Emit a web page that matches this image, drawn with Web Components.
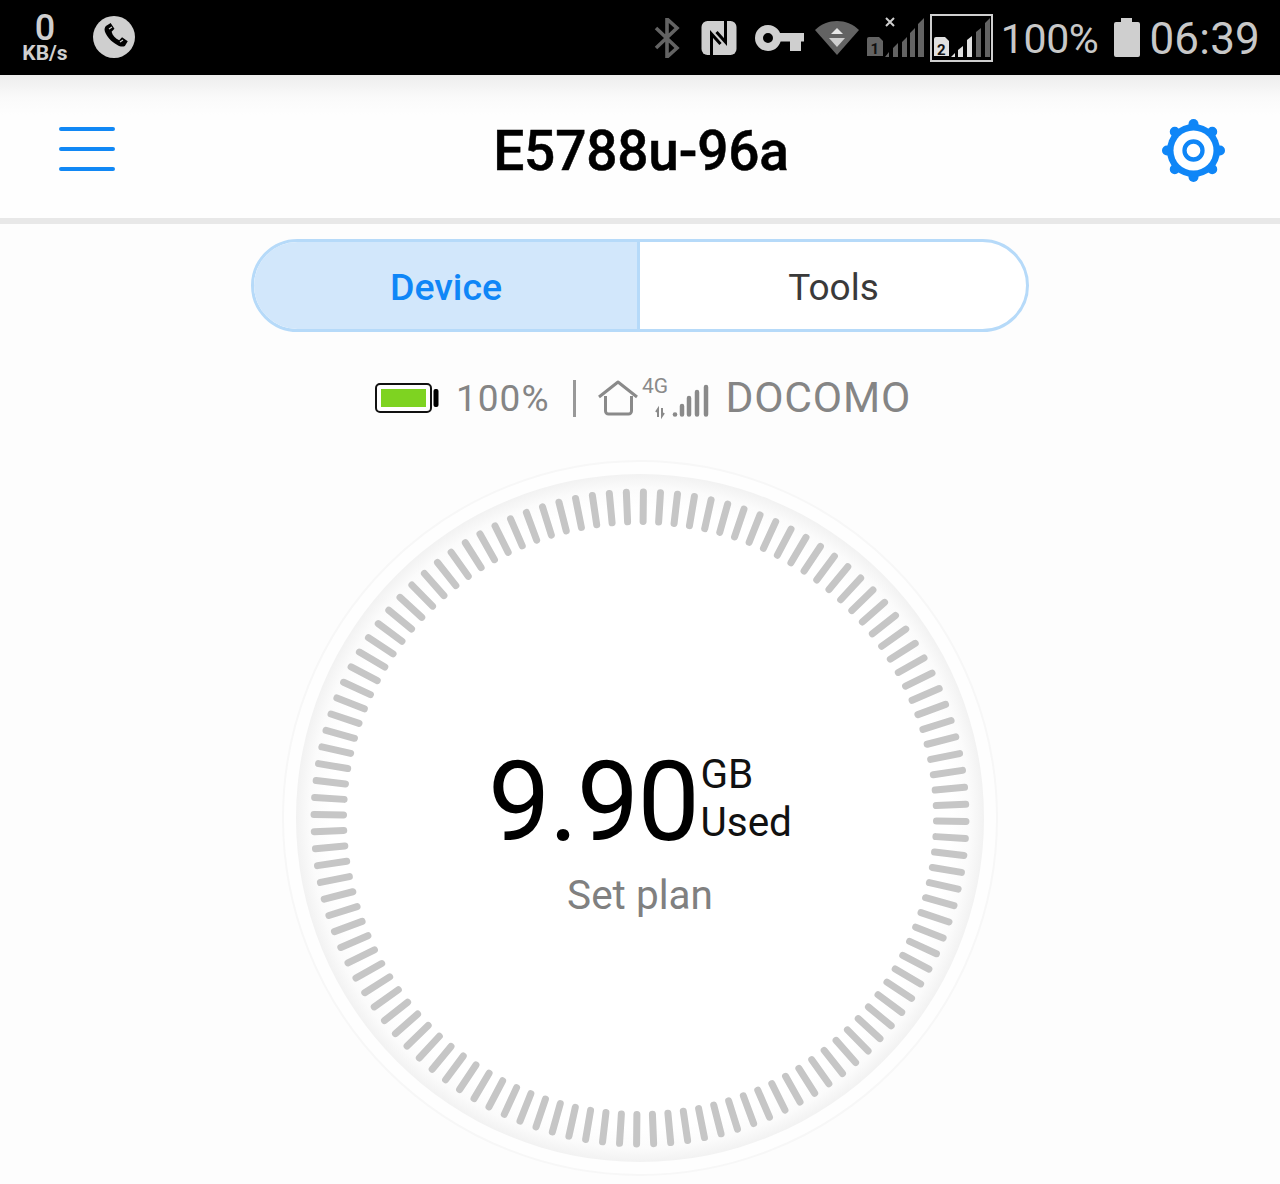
<!DOCTYPE html>
<html>
<head>
<meta charset="utf-8">
<title>E5788u-96a</title>
<style>
  html, body { margin: 0; padding: 0; background: #fdfdfd; }
  body { width: 1280px; height: 1184px; overflow: hidden; font-family: Roboto, "Liberation Sans", sans-serif; }
</style>
</head>
<body>
<status-bar></status-bar>
<app-header title-text="E5788u-96a"></app-header>
<tab-switch></tab-switch>
<device-info></device-info>
<usage-gauge value="9.90" unit="GB" label="Used" action="Set plan"></usage-gauge>

<script>
class statusBar extends HTMLElement {
  constructor() {
    super();
    this.shadowDOM = this.attachShadow({mode: 'open'});
    this.render();
  }

  render() {
    this.shadowDOM.innerHTML = `
    <style>
    :host { display: flex; align-items: center; height: 75px; background: #000; color: #cfcfcf; box-sizing: border-box; padding: 0 20px 0 21px; }
    .speed { width: 48px; display: flex; flex-direction: column; align-items: center; margin-top: 1px; }
    .speed b { font-size: 36px; line-height: 30px; font-weight: 500; }
    .speed span { font-size: 21px; line-height: 20px; font-weight: 700; }
    .call { margin-left: 24px; margin-bottom: 2px; }
    .right { margin-left: auto; display: flex; align-items: center; }
    svg { display: block; flex: none; }
    .pct { font-size: 41px; font-weight: 400; margin-left: 8px; margin-top: 2px; letter-spacing: -0.4px; color: #c8c8c8; }
    .time { font-size: 44px; font-weight: 400; margin-left: 9px; margin-top: 2px; letter-spacing: 0.2px; color: #c8c8c8; }
    </style>
    <div class="speed"><b>0</b><span>KB/s</span></div>
    <svg class="call" width="42" height="42" viewBox="0 0 42 42">
      <circle cx="21" cy="21" r="21" fill="#cfcfcf"/>
      <path d="M12 11l5-3 4 6-3 3c1 4 4 7 8 9l3-3 6 4-3 5c-2 1-5 1-8-1-7-4-11-9-13-14-1-3 0-5 1-6z" fill="#000" transform="translate(1.5 -0.5) scale(0.95)"/>
      <path d="M16 13l3-2M27 26l3-2" stroke="#cfcfcf" stroke-width="1.2"/>
    </svg>
    <div class="right">
      <svg width="26" height="40" viewBox="0 0 26 40" fill="none" stroke="#636363" stroke-width="3.6">
        <path d="M2 10l21 20-10 9V1l10 9L2 30"/>
      </svg>
      <svg style="margin-left:21px" width="36" height="36" viewBox="0 0 36 36">
        <rect x="0.5" y="1" width="35" height="34" rx="6" fill="#cfcfcf"/>
        <path d="M10.500 35V14l9 10" fill="none" stroke="#000" stroke-width="3"/>
        <path d="M24.500 1v21l-9-10" fill="none" stroke="#000" stroke-width="3"/>
      </svg>
      <svg style="margin-left:18px" width="50" height="26" viewBox="0 0 50 26">
        <circle cx="13" cy="13" r="9" fill="none" stroke="#cfcfcf" stroke-width="8"/>
        <path d="M21 8h28v8.500h-3V26H35v-9.500H21z" fill="#cfcfcf"/>
      </svg>
      <svg style="margin-left:10px" width="44" height="36" viewBox="0 0 44 36">
        <path d="M0 10C6 4 14 1 22 1s16 3 22 9L22 35z" fill="#636363"/>
        <path d="M22 8l6 6H16z" fill="#e8e8e8"/>
        <path d="M14 18h16l-8 9z" fill="#cfcfcf"/>
      </svg>
      <svg style="margin-left:8px;margin-bottom:3px" width="58" height="48" viewBox="0 0 58 48">
        <path d="M19 6l8 8M27 6l-8 8" stroke="#cfcfcf" stroke-width="2"/>
        <path d="M0 27a2 2 0 0 1 2-2h10l4 4v15H0z" fill="#636363"/>
        <text x="3.500" y="42" font-size="15" font-weight="700" fill="#111" font-family="Roboto, sans-serif">1</text>
        <path d="M18 45l4-5v5zM26 45V36l5-5v14zM35 45V30l5-5v20zM43 45V21l5-5v29zM51 45V12l6-6v39z" fill="#636363"/>
      </svg>
      <svg style="margin-left:5px" width="63" height="48" viewBox="0 0 63 48">
        <rect x="1" y="1" width="61" height="46" fill="none" stroke="#cfcfcf" stroke-width="2"/>
        <path d="M4 25a2 2 0 0 1 2-2h9l4 4v15H4z" fill="#e0e0e0"/>
        <text x="7" y="41" font-size="15" font-weight="700" fill="#111" font-family="Roboto, sans-serif">2</text>
        <path d="M21 43l4-4v4zM28 43V36l5-4v11zM37 43V26l5-4v21z" fill="#e0e0e0"/>
        <path d="M46 43V18l5-4v29zM55 43V9l5-5v39z" fill="#636363"/>
      </svg>
      <span class="pct">100%</span>
      <svg style="margin-left:16px" width="26" height="39" viewBox="0 0 26 39">
        <path d="M7 0h11v4h6a2 2 0 0 1 2 2v31a2 2 0 0 1-2 2H2a2 2 0 0 1-2-2V6a2 2 0 0 1 2-2h5z" fill="#cfcfcf"/>
      </svg>
      <span class="time">06:39</span>
    </div>
    `;
  }
}

class appHeader extends HTMLElement {
  constructor() {
    super();
    this.shadowDOM = this.attachShadow({mode: 'open'});
  }

  connectedCallback() {
    let teeth = '';
    for (let i = 0; i < 8; i++) {
      let a = i * Math.PI / 4;
      teeth += `<line x1="${(31.5 + 24 * Math.sin(a)).toFixed(2)}" y1="${(31.5 - 24 * Math.cos(a)).toFixed(2)}" x2="${(31.5 + 26.5 * Math.sin(a)).toFixed(2)}" y2="${(31.5 - 26.5 * Math.cos(a)).toFixed(2)}"/>`;
    }
    this.shadowDOM.innerHTML = `
    <style>
    :host { display: flex; align-items: center; justify-content: space-between; height: 149px; box-sizing: border-box;
      padding: 4px 55px 0 59px; border-bottom: 6px solid #e8e8e8;
      background: linear-gradient(#ededed 0, #fafafa 22px, #fefefe 40px); }
    .title { font-size: 55px; font-weight: 500; color: #000; letter-spacing: -0.2px; margin: 4px 0 0 5px; -webkit-text-stroke: 0.5px #000; }
    svg { display: block; }
    .gear { margin-top: 4px; }
    </style>
    <svg width="56" height="44" viewBox="0 0 56 44" stroke="#1188f5" stroke-width="4" stroke-linecap="round">
      <path d="M2 2h52M2 22h52M2 42h52"/>
    </svg>
    <div class="title">${this.getAttribute('title-text')}</div>
    <svg class="gear" width="63" height="63" viewBox="0 0 63 63">
      <g stroke="#0f86f7" stroke-width="10" stroke-linecap="round">${teeth}</g>
      <circle cx="31.500" cy="31.500" r="26.500" fill="#0f86f7"/>
      <circle cx="31.500" cy="31.500" r="20" fill="#fff"/>
      <circle cx="31.500" cy="31.500" r="9" fill="none" stroke="#0f86f7" stroke-width="4.300"/>
    </svg>
    `;
  }
}

class tabSwitch extends HTMLElement {
  constructor() {
    super();
    this.shadowDOM = this.attachShadow({mode: 'open'});
    this.shadowDOM.innerHTML = `
    <style>
    :host { display: grid; grid-template-columns: 1fr 1fr; width: 778px; height: 93px; box-sizing: border-box; margin: 15px 0 0 250.500px;
      border: 3px solid #b6daf9; border-radius: 47px; overflow: hidden; font-size: 37px; background: #fff; }
    div { display: flex; align-items: center; justify-content: center; padding: 3px 0 0 2px; }
    .on { background: #d2e7fb; color: #0f86f7; font-weight: 500; border-right: 3px solid #b6daf9; font-size: 37.500px; }
    .off { color: #3a3a3a; }
    </style>
    <div class="on">Device</div>
    <div class="off">Tools</div>
    `;
  }
}

class deviceInfo extends HTMLElement {
  constructor() {
    super();
    this.shadowDOM = this.attachShadow({mode: 'open'});
    this.shadowDOM.innerHTML = `
    <style>
    :host { display: flex; align-items: center; height: 48px; margin-top: 42px; padding-left: 375px; color: #858585; font-size: 37px; }
    svg { display: block; flex: none; }
    .pct { margin-left: 17px; letter-spacing: 1px; }
    .sep { width: 3px; height: 37px; background: #999; margin: 0 21px 0 24px; }
    .op { margin: -2px 0 0 15px; font-size: 42.600px; letter-spacing: 0.8px; }
    </style>
    <svg width="64" height="30" viewBox="0 0 64 30">
      <rect x="1" y="1" width="55" height="28" rx="4" fill="#fff" stroke="#111" stroke-width="2"/>
      <rect x="6" y="6" width="45" height="18" fill="#7ed321"/>
      <rect x="58.500" y="6" width="5" height="18" rx="2" fill="#000"/>
    </svg>
    <span class="pct">100%</span>
    <i class="sep"></i>
    <svg width="113" height="50" viewBox="0 0 113 50">
      <path d="M2 24L21 9l19 15" fill="none" stroke="#8a8a8a" stroke-width="3" stroke-linejoin="round"/>
      <path d="M8.500 23v15a3 3 0 0 0 3 3h20a3 3 0 0 0 3-3V23" fill="none" stroke="#8a8a8a" stroke-width="3"/>
      <text x="45" y="20" font-size="21" fill="#8a8a8a" font-family="Roboto, sans-serif">4G</text>
      <path d="M61 44v-8l-2 3M65 35v8l2-3" fill="none" stroke="#8a8a8a" stroke-width="2"/>
      <circle cx="78" cy="41.500" r="2.300" fill="#8a8a8a"/>
      <path d="M85 33v8.500M92 25v16.500M100 19v22.500M109 14v27.500" stroke="#8a8a8a" stroke-width="4.500" stroke-linecap="round"/>
    </svg>
    <span class="op">DOCOMO</span>
    `;
  }
}

class usageGauge extends HTMLElement {
  constructor() {
    super();
    this.shadowDOM = this.attachShadow({mode: 'open'});
  }

  connectedCallback() {
    let ticks = '';
    for (let i = 0; i < 120; i++) {
      let a = (i * 3 + 0.6) * Math.PI / 180;
      let s = Math.sin(a), c = Math.cos(a);
      ticks += `<line x1="${(360 + 296.5 * s).toFixed(2)}" y1="${(360 - 296.5 * c).toFixed(2)}" x2="${(360 + 326 * s).toFixed(2)}" y2="${(360 - 326 * c).toFixed(2)}"/>`;
    }
    this.shadowDOM.innerHTML = `
    <style>
    :host { display: block; position: relative; width: 720px; height: 720px; margin: 36px auto 0; }
    svg { display: block; }
    .center { position: absolute; inset: 0; display: flex; flex-direction: column; align-items: center; justify-content: center; }
    .main { display: flex; align-items: flex-start; margin-top: 32px; color: #000; }
    .num { font-size: 111px; line-height: 104px; letter-spacing: -1.5px; font-weight: 400; }
    .unit { font-size: 40.500px; line-height: 48px; margin-left: 2px; color: #111; }
    .action { font-size: 40.500px; line-height: 48px; color: #808080; margin-top: 17px; }
    </style>
    <svg width="720" height="720" viewBox="0 0 720 720">
      <defs>
        <radialGradient id="ring" cx="50%" cy="50%" r="50%">
          <stop offset="0.9" stop-color="#fff"/>
          <stop offset="0.96" stop-color="#fbfbfb"/>
          <stop offset="1" stop-color="#f2f2f2"/>
        </radialGradient>
      </defs>
      <circle cx="360" cy="360" r="357" fill="#fefefe" stroke="#f7f7f7" stroke-width="2"/>
      <circle cx="360" cy="360" r="344" fill="url(#ring)"/>
      <g stroke="#c6c6c6" stroke-width="7" stroke-linecap="round">${ticks}</g>
    </svg>
    <div class="center">
      <div class="main">
        <div class="num">${this.getAttribute('value')}</div>
        <div class="unit">${this.getAttribute('unit')}<br>${this.getAttribute('label')}</div>
      </div>
      <div class="action">${this.getAttribute('action')}</div>
    </div>
    `;
  }
}

customElements.define('status-bar', statusBar);
customElements.define('app-header', appHeader);
customElements.define('tab-switch', tabSwitch);
customElements.define('device-info', deviceInfo);
customElements.define('usage-gauge', usageGauge);
</script>
</body>
</html>
